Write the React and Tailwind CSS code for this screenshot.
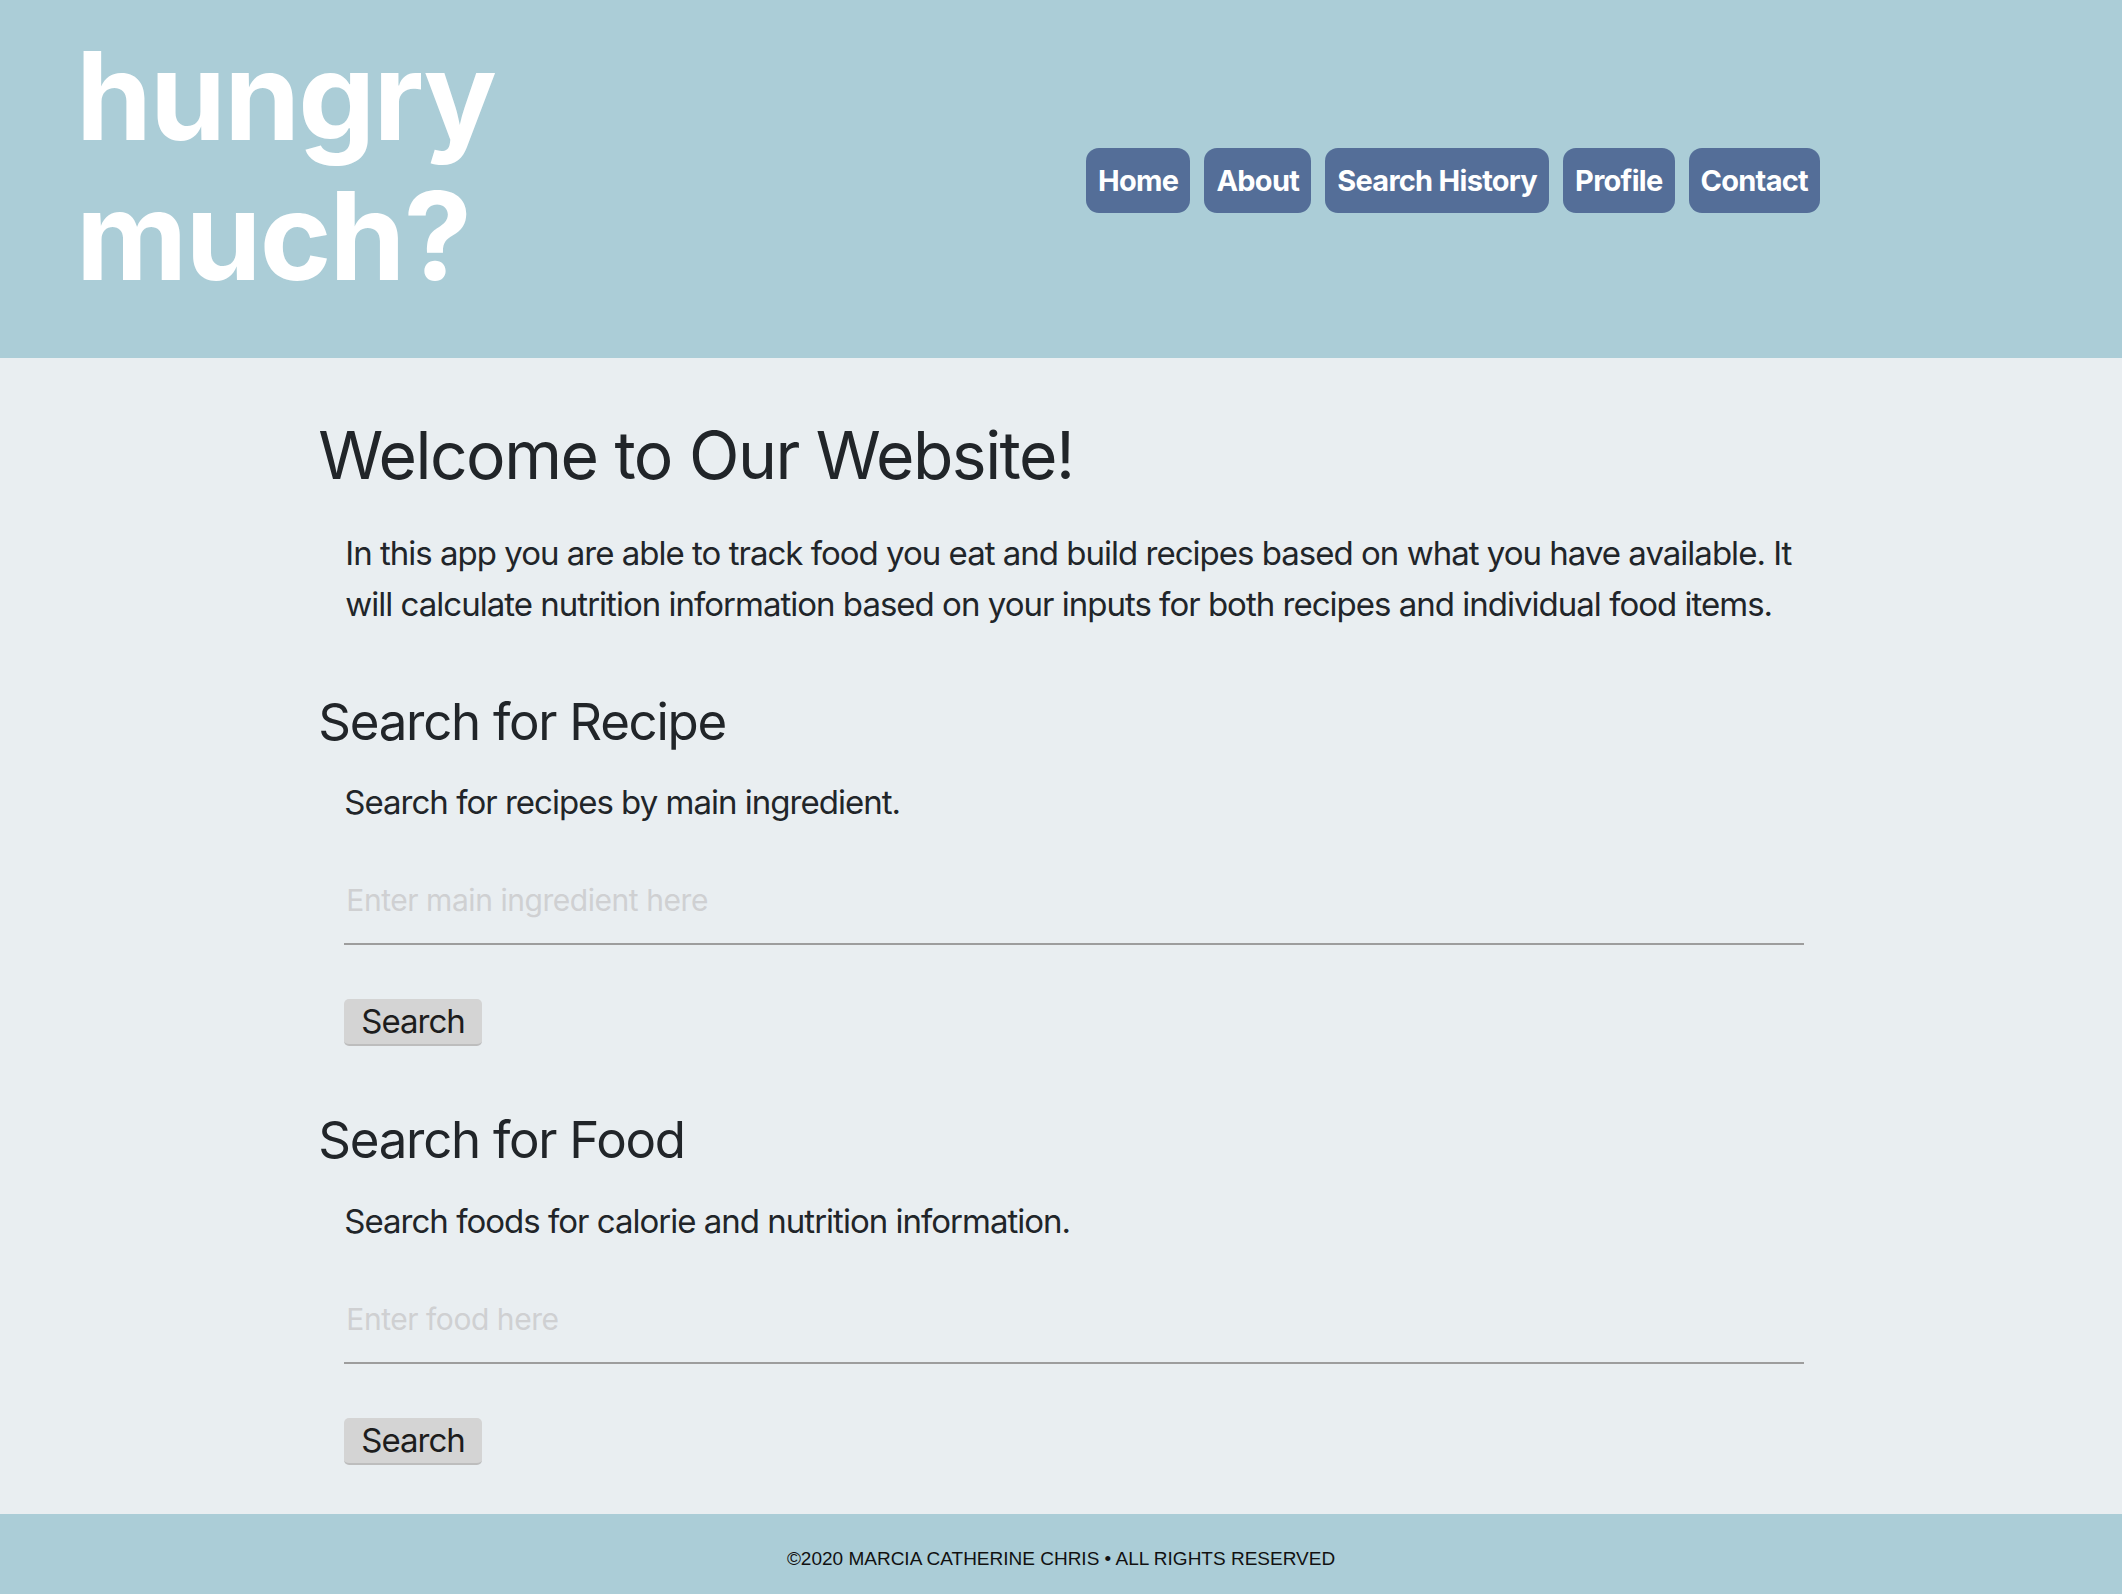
import React from 'react';

const NAV = ['Home', 'About', 'Search History', 'Profile', 'Contact'];

function NavLink({ label }) {
  return (
    <a
      href="#"
      className="h-[65px] px-[12px] flex items-center rounded-[13px] bg-[#546e98] text-white text-[29px] leading-[65px] font-bold tracking-[-0.025em]"
    >
      {label}
    </a>
  );
}

function SearchSection({ title, description, placeholder, className }) {
  return (
    <section className={className}>
      <h3 className="text-[51px] leading-[1.2] font-normal tracking-[-0.025em]">{title}</h3>
      <div className="pl-[26px] flex flex-col items-start">
        <p className="mt-[25px] text-[33px] leading-[51px] tracking-[-0.03em]">{description}</p>
        <input
          type="text"
          placeholder={placeholder}
          className="mt-[29px] w-full bg-transparent border-b-2 border-[#9d9d9d] px-[2px] py-[25px] text-[30px] leading-[36px] tracking-[-0.015em] outline-none placeholder:text-[#cfd0d2]"
        />
        <button
          type="button"
          className="mt-[54px] h-[47px] px-[17px] rounded-[5px] bg-[#d4d4d4] border-b-2 border-[#bdbdbd] text-[33px] leading-[45px] tracking-[-0.03em] text-[#1d1d1d]"
        >
          Search
        </button>
      </div>
    </section>
  );
}

export default function App() {
  return (
    <div className="min-h-screen flex flex-col bg-[#e9eef1] text-[#212529] font-['Inter','Noto_Sans',sans-serif]">
      <header className="h-[358px] bg-[#abcdd7] flex pl-[76px] pr-[302px]">
        <h1 className="pt-[26px] text-[122px] leading-[140px] font-bold text-white tracking-[-0.015em]">
          hungry
          <br />
          much?
        </h1>
        <nav className="ml-auto mt-[148px] self-start flex gap-[14px]">
          {NAV.map((label) => (
            <NavLink key={label} label={label} />
          ))}
        </nav>
      </header>

      <main className="w-[70%] mx-auto pt-[58px] pb-[47px]">
        <h2 className="text-[66px] leading-[1.2] font-normal tracking-[-0.023em]">Welcome to Our Website!</h2>
        <p className="mt-[33px] pl-[27px] text-[33px] leading-[51px] tracking-[-0.03em]">
          In this app you are able to track food you eat and build recipes based on what you have
          available. It will calculate nutrition information based on your inputs for both recipes and
          individual food items.
        </p>

        <SearchSection
          className="mt-[61px]"
          title="Search for Recipe"
          description="Search for recipes by main ingredient."
          placeholder="Enter main ingredient here"
        />
        <SearchSection
          className="mt-[63px]"
          title="Search for Food"
          description="Search foods for calorie and nutrition information."
          placeholder="Enter food here"
        />
      </main>

      <footer className="h-[80px] mt-auto bg-[#abcdd7] flex items-center justify-center pt-[11px]">
        <p className="text-[19px] text-[#111] font-['Liberation_Sans',sans-serif]">
          ©2020 MARCIA CATHERINE CHRIS • ALL RIGHTS RESERVED
        </p>
      </footer>
    </div>
  );
}
